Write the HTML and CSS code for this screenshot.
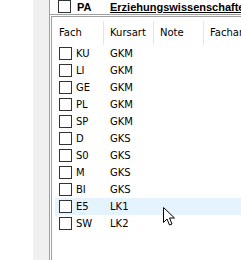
FILE: index.html
```html
<!DOCTYPE html>
<html lang="de">
<head>
	<meta charset="UTF-8">
	<title>Fächer</title>
	<link rel="stylesheet" href="styles.css">
</head>
<body>
	<div class="screen">
		<div class="blank"></div>
		<div class="gutter"></div>
		<div class="panel">
			<div class="top-row">
				<span class="box"></span>
				<span class="code">PA</span>
				<span class="name">Erziehungswissenschaften</span>
			</div>
			<div class="list">
				<div class="head">
					<span class="col c1">Fach</span>
					<span class="col">Kursart</span>
					<span class="col">Note</span>
					<span class="col">Facharbeit</span>
				</div>
				<div class="rows">
					<div class="row"><span class="c1"><span class="box"></span>KU</span><span>GKM</span></div>
					<div class="row"><span class="c1"><span class="box"></span>LI</span><span>GKM</span></div>
					<div class="row"><span class="c1"><span class="box"></span>GE</span><span>GKM</span></div>
					<div class="row"><span class="c1"><span class="box"></span>PL</span><span>GKM</span></div>
					<div class="row"><span class="c1"><span class="box"></span>SP</span><span>GKM</span></div>
					<div class="row"><span class="c1"><span class="box"></span>D</span><span>GKS</span></div>
					<div class="row"><span class="c1"><span class="box"></span>S0</span><span>GKS</span></div>
					<div class="row"><span class="c1"><span class="box"></span>M</span><span>GKS</span></div>
					<div class="row"><span class="c1"><span class="box"></span>BI</span><span>GKS</span></div>
					<div class="row hover"><span class="c1"><span class="box"></span>E5</span><span>LK1</span></div>
					<div class="row"><span class="c1"><span class="box"></span>SW</span><span>LK2</span></div>
				</div>
			</div>
		</div>
		<svg class="cursor" width="13" height="20" viewBox="0 0 13 20">
			<path d="M0.5 0.5 L0.5 15.5 L4 12 L6.5 18 L9 17 L6.5 11 L11.5 11 Z" fill="#fff" stroke="#000" stroke-width="1"/>
		</svg>
	</div>
</body>
</html>
```

FILE: styles.css
```css
body {
	margin: 0;
	background: #fff;
	font-family: "DejaVu Sans", sans-serif;
	font-size: 10px;
	color: #000;
}

.screen {
	position: relative;
	display: flex;
	width: 241px;
	height: 260px;
	overflow: hidden;
}

.blank {
	width: 33px;
	flex-shrink: 0;
}

.gutter {
	width: 16px;
	flex-shrink: 0;
	background: #f0f0f0;
}

.panel {
	flex: 1;
	border-left: 1px solid #a0a0a0;
	min-width: 0;
}

.top-row {
	height: 14px;
	border-bottom: 1px solid #a0a0a0;
	overflow: hidden;
	display: flex;
	align-items: flex-end;
	white-space: nowrap;
}

.top-row .box {
	margin: 0 6px 1px 8px;
}

.top-row .code,
.top-row .name {
	flex-shrink: 0;
	font-family: "Liberation Sans", sans-serif;
	font-size: 11px;
	font-weight: bold;
	line-height: 14px;
}

.top-row .code {
	width: 33px;
}

.top-row .name {
	text-decoration: underline;
}

.box {
	display: inline-block;
	width: 11px;
	height: 11px;
	border: 1px solid #333;
	background: #fff;
	flex-shrink: 0;
}

.list {
	margin: 1px 0 0 1px;
	border-left: 1px solid #a0a0a0;
	border-top: 1px solid #a0a0a0;
	height: 100%;
}

.head {
	display: flex;
	height: 28px;
	white-space: nowrap;
}

.col {
	width: 43px;
	flex-shrink: 0;
	margin-top: 4px;
	height: 24px;
	line-height: 23px;
	padding-left: 6px;
	border-right: 1px solid #e5e5e5;
}

.col.c1 {
	width: 44px;
	padding-left: 7px;
}

.row {
	display: flex;
	align-items: center;
	height: 17px;
	margin-left: 3px;
	white-space: nowrap;
}

.row.hover {
	background: #e5f3ff;
}

.row .c1 {
	display: flex;
	align-items: center;
	width: 49px;
	padding-left: 4px;
	box-sizing: border-box;
}

.row .box {
	margin-right: 4px;
}

.row span + span {
	padding-left: 6px;
}

.cursor {
	position: absolute;
	left: 163px;
	top: 207px;
}
```
